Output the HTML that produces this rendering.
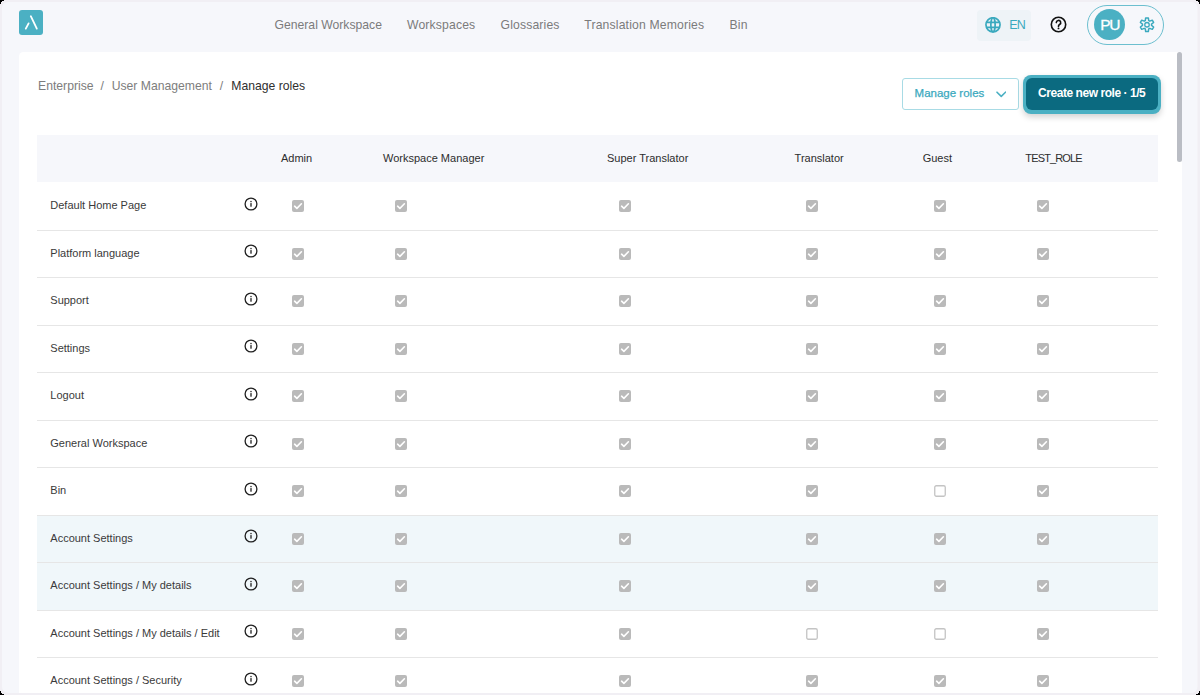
<!DOCTYPE html>
<html><head><meta charset="utf-8">
<style>
*{box-sizing:border-box;margin:0;padding:0}
html,body{width:1200px;height:695px;overflow:hidden;background:#f6f7fb}
body{font-family:"Liberation Sans",sans-serif;position:relative}
.abs{position:absolute}
.frame{position:absolute;left:0;top:0;width:1200px;height:695px;background:#f0eff4;border-radius:6px;overflow:hidden}
.inner{position:absolute;left:2px;top:2px;width:1195.5px;height:691px;background:#f6f7fb;border-radius:6px}
.t{position:absolute;white-space:nowrap;line-height:1}
.nav{font-size:12.2px;color:#7b7b7b;top:18.5px}
.bc{font-size:12.2px;color:#7d7d7d;top:80.1px}
.card{position:absolute;left:18.6px;top:52px;width:1163.4px;height:641px;background:#fff;border-radius:4.5px 4.5px 0 0;overflow:hidden}
.hdr{position:absolute;left:37.4px;top:135px;width:1121px;height:47px;background:#f6f7fb}
.hl{font-size:11px;color:#2d2d2d;top:153px}
.row{position:absolute;left:37.4px;width:1121px}
.div{position:absolute;left:37.4px;width:1121px;height:1px;background:#e6e6e6}
.rl{font-size:11px;color:#3a3a3a}
.cb{position:absolute;width:12px;height:12px;line-height:0}
.info{position:absolute;width:14px;height:14px;line-height:0}
</style></head><body>

<div class="abs" style="left:19px;top:10px;width:24.3px;height:24.8px;background:#4bb0c3;border-radius:3px"></div>
<svg class="abs" style="left:19px;top:10px" width="25" height="25" viewBox="0 0 25 25"><path d="M11.8 6.2 L17.8 18.6" stroke="#fff" stroke-width="1.8" stroke-linecap="round"/><path d="M9.6 13.4 L6.8 18.6" stroke="#fff" stroke-width="1.8" stroke-linecap="round"/></svg>
<div class="t nav" style="left:274.5px;letter-spacing:0px">General Workspace</div>
<div class="t nav" style="left:407px;letter-spacing:0.15px">Workspaces</div>
<div class="t nav" style="left:500.5px;letter-spacing:0.15px">Glossaries</div>
<div class="t nav" style="left:584.3px;letter-spacing:0.16px">Translation Memories</div>
<div class="t nav" style="left:729.4px;letter-spacing:0.2px">Bin</div>
<div class="abs" style="left:977px;top:9.5px;width:53.5px;height:31px;background:#eef3f7;border-radius:4px"></div>
<svg class="abs" style="left:985px;top:17px" width="16" height="16" viewBox="0 0 16 16"><g fill="none" stroke="#3aa9be" stroke-width="1.7"><circle cx="8" cy="7.8" r="7.05"/><path d="M1.2 5.4h13.6M1.2 10.3h13.6"/><ellipse cx="8" cy="7.8" rx="2.15" ry="7.05"/></g></svg>
<div class="t" style="left:1009.3px;top:18.9px;font-size:12.5px;letter-spacing:-1px;color:#3aa9be">EN</div>
<svg class="abs" style="left:1050.3px;top:16.1px" width="17" height="17" viewBox="0 0 17 17"><circle cx="8.5" cy="8.5" r="7.2" fill="none" stroke="#111" stroke-width="1.6"/><path d="M6.3 6.6a2.2 2.2 0 1 1 3.3 1.9c-.7.4-1.1.8-1.1 1.6v.4" fill="none" stroke="#111" stroke-width="1.6" stroke-linecap="round"/><circle cx="8.5" cy="12.4" r="0.95" fill="#111"/></svg>
<div class="abs" style="left:1087px;top:5px;width:76.5px;height:39.5px;border:1.2px solid #6cbfcf;border-radius:20px"></div>
<div class="abs" style="left:1094px;top:9.4px;width:31px;height:31px;background:#4bb0c3;border-radius:50%"></div>
<div class="t" style="left:1100.2px;top:16.9px;font-size:15.5px;color:#fff;letter-spacing:-1.2px;-webkit-text-stroke:0.3px #fff">PU</div>
<svg class="abs" style="left:1139px;top:17px" width="16" height="16" viewBox="0 0 16 16"><path fill="none" stroke="#3aa9be" stroke-width="1.5" stroke-linejoin="round" d="M9.70 3.53 L9.34 0.88 L6.66 0.88 L6.30 3.53 L5.20 4.16 L2.72 3.16 L1.38 5.47 L3.49 7.12 L3.49 8.38 L1.38 10.03 L2.72 12.34 L5.20 11.34 L6.30 11.97 L6.66 14.62 L9.34 14.62 L9.70 11.97 L10.80 11.34 L13.28 12.34 L14.62 10.03 L12.51 8.38 L12.51 7.12 L14.62 5.47 L13.28 3.16 L10.80 4.16Z"/><circle cx="8" cy="7.75" r="2.25" fill="none" stroke="#3aa9be" stroke-width="1.3"/></svg>
<div class="card"></div>
<div class="abs" style="left:1177.2px;top:52px;width:4.6px;height:110px;background:#babdc4;border-radius:3px"></div>
<div class="t bc" style="left:38px;color:#7d7d7d">Enterprise</div>
<div class="t bc" style="left:100.6px;color:#7d7d7d">/</div>
<div class="t bc" style="left:111.7px;color:#7d7d7d">User Management</div>
<div class="t bc" style="left:219.8px;color:#7d7d7d">/</div>
<div class="t bc" style="left:231.3px;color:#2f2f2f">Manage roles</div>
<div class="abs" style="left:901.5px;top:77.5px;width:117.5px;height:32px;border:1px solid #a8dbe5;border-radius:3px;background:#fff"></div>
<div class="t" style="left:914.6px;top:88.3px;font-size:11.5px;color:#3aa9be;-webkit-text-stroke:0.25px #3aa9be">Manage roles</div>
<svg class="abs" style="left:995.5px;top:90.5px" width="10.5" height="7" viewBox="0 0 10.5 7"><path d="M1 1.2 L5.25 5.4 L9.5 1.2" fill="none" stroke="#4bb0c3" stroke-width="1.6" stroke-linecap="round" stroke-linejoin="round"/></svg>
<div class="abs" style="left:1022.5px;top:75px;width:138.5px;height:38.5px;background:#4bb0c3;border-radius:8px;box-shadow:0 3px 6px rgba(0,0,0,0.18)"></div>
<div class="abs" style="left:1026px;top:78px;width:132px;height:32px;background:#0b6a80;border-radius:6px"></div>
<div class="t" style="left:1038px;top:87.3px;font-size:12px;font-weight:700;color:#fff;letter-spacing:-0.45px">Create new role · 1/5</div>
<div class="hdr"></div>
<div class="t hl" style="left:281px">Admin</div>
<div class="t hl" style="left:383px">Workspace Manager</div>
<div class="t hl" style="left:607px">Super Translator</div>
<div class="t hl" style="left:794.6px">Translator</div>
<div class="t hl" style="left:922.7px">Guest</div>
<div class="t hl" style="left:1025.3px;letter-spacing:-0.85px">TEST_ROLE</div>
<div class="row" style="top:514.9px;height:47.5px;background:#f0f7fa"></div>
<div class="row" style="top:562.4px;height:47.5px;background:#f0f7fa"></div>
<div class="div" style="top:229.9px"></div>
<div class="t rl" style="left:50.3px;top:200.4px">Default Home Page</div>
<div class="info" style="left:244px;top:196.6px"><svg width="14" height="14" viewBox="0 0 14 14"><circle cx="7" cy="7" r="5.9" stroke="#1f1f1f" stroke-width="1.3" fill="none"/><rect x="6.35" y="6.1" width="1.3" height="3.6" fill="#1f1f1f"/><rect x="6.35" y="3.9" width="1.3" height="1.3" fill="#1f1f1f"/></svg></div>
<div class="cb" style="left:292.2px;top:200.1px"><svg width="12" height="12" viewBox="0 0 12 12"><rect x="0" y="0" width="12" height="12" rx="2" fill="#bababa"/><path d="M2.6 6.2 L4.9 8.4 L9.4 3.8" stroke="#fff" stroke-width="1.6" fill="none" stroke-linecap="round" stroke-linejoin="round"/></svg></div>
<div class="cb" style="left:395.1px;top:200.1px"><svg width="12" height="12" viewBox="0 0 12 12"><rect x="0" y="0" width="12" height="12" rx="2" fill="#bababa"/><path d="M2.6 6.2 L4.9 8.4 L9.4 3.8" stroke="#fff" stroke-width="1.6" fill="none" stroke-linecap="round" stroke-linejoin="round"/></svg></div>
<div class="cb" style="left:618.8px;top:200.1px"><svg width="12" height="12" viewBox="0 0 12 12"><rect x="0" y="0" width="12" height="12" rx="2" fill="#bababa"/><path d="M2.6 6.2 L4.9 8.4 L9.4 3.8" stroke="#fff" stroke-width="1.6" fill="none" stroke-linecap="round" stroke-linejoin="round"/></svg></div>
<div class="cb" style="left:805.6px;top:200.1px"><svg width="12" height="12" viewBox="0 0 12 12"><rect x="0" y="0" width="12" height="12" rx="2" fill="#bababa"/><path d="M2.6 6.2 L4.9 8.4 L9.4 3.8" stroke="#fff" stroke-width="1.6" fill="none" stroke-linecap="round" stroke-linejoin="round"/></svg></div>
<div class="cb" style="left:934.3px;top:200.1px"><svg width="12" height="12" viewBox="0 0 12 12"><rect x="0" y="0" width="12" height="12" rx="2" fill="#bababa"/><path d="M2.6 6.2 L4.9 8.4 L9.4 3.8" stroke="#fff" stroke-width="1.6" fill="none" stroke-linecap="round" stroke-linejoin="round"/></svg></div>
<div class="cb" style="left:1036.5px;top:200.1px"><svg width="12" height="12" viewBox="0 0 12 12"><rect x="0" y="0" width="12" height="12" rx="2" fill="#bababa"/><path d="M2.6 6.2 L4.9 8.4 L9.4 3.8" stroke="#fff" stroke-width="1.6" fill="none" stroke-linecap="round" stroke-linejoin="round"/></svg></div>
<div class="div" style="top:277.4px"></div>
<div class="t rl" style="left:50.3px;top:247.9px">Platform language</div>
<div class="info" style="left:244px;top:244.1px"><svg width="14" height="14" viewBox="0 0 14 14"><circle cx="7" cy="7" r="5.9" stroke="#1f1f1f" stroke-width="1.3" fill="none"/><rect x="6.35" y="6.1" width="1.3" height="3.6" fill="#1f1f1f"/><rect x="6.35" y="3.9" width="1.3" height="1.3" fill="#1f1f1f"/></svg></div>
<div class="cb" style="left:292.2px;top:247.6px"><svg width="12" height="12" viewBox="0 0 12 12"><rect x="0" y="0" width="12" height="12" rx="2" fill="#bababa"/><path d="M2.6 6.2 L4.9 8.4 L9.4 3.8" stroke="#fff" stroke-width="1.6" fill="none" stroke-linecap="round" stroke-linejoin="round"/></svg></div>
<div class="cb" style="left:395.1px;top:247.6px"><svg width="12" height="12" viewBox="0 0 12 12"><rect x="0" y="0" width="12" height="12" rx="2" fill="#bababa"/><path d="M2.6 6.2 L4.9 8.4 L9.4 3.8" stroke="#fff" stroke-width="1.6" fill="none" stroke-linecap="round" stroke-linejoin="round"/></svg></div>
<div class="cb" style="left:618.8px;top:247.6px"><svg width="12" height="12" viewBox="0 0 12 12"><rect x="0" y="0" width="12" height="12" rx="2" fill="#bababa"/><path d="M2.6 6.2 L4.9 8.4 L9.4 3.8" stroke="#fff" stroke-width="1.6" fill="none" stroke-linecap="round" stroke-linejoin="round"/></svg></div>
<div class="cb" style="left:805.6px;top:247.6px"><svg width="12" height="12" viewBox="0 0 12 12"><rect x="0" y="0" width="12" height="12" rx="2" fill="#bababa"/><path d="M2.6 6.2 L4.9 8.4 L9.4 3.8" stroke="#fff" stroke-width="1.6" fill="none" stroke-linecap="round" stroke-linejoin="round"/></svg></div>
<div class="cb" style="left:934.3px;top:247.6px"><svg width="12" height="12" viewBox="0 0 12 12"><rect x="0" y="0" width="12" height="12" rx="2" fill="#bababa"/><path d="M2.6 6.2 L4.9 8.4 L9.4 3.8" stroke="#fff" stroke-width="1.6" fill="none" stroke-linecap="round" stroke-linejoin="round"/></svg></div>
<div class="cb" style="left:1036.5px;top:247.6px"><svg width="12" height="12" viewBox="0 0 12 12"><rect x="0" y="0" width="12" height="12" rx="2" fill="#bababa"/><path d="M2.6 6.2 L4.9 8.4 L9.4 3.8" stroke="#fff" stroke-width="1.6" fill="none" stroke-linecap="round" stroke-linejoin="round"/></svg></div>
<div class="div" style="top:324.9px"></div>
<div class="t rl" style="left:50.3px;top:295.4px">Support</div>
<div class="info" style="left:244px;top:291.59999999999997px"><svg width="14" height="14" viewBox="0 0 14 14"><circle cx="7" cy="7" r="5.9" stroke="#1f1f1f" stroke-width="1.3" fill="none"/><rect x="6.35" y="6.1" width="1.3" height="3.6" fill="#1f1f1f"/><rect x="6.35" y="3.9" width="1.3" height="1.3" fill="#1f1f1f"/></svg></div>
<div class="cb" style="left:292.2px;top:295.09999999999997px"><svg width="12" height="12" viewBox="0 0 12 12"><rect x="0" y="0" width="12" height="12" rx="2" fill="#bababa"/><path d="M2.6 6.2 L4.9 8.4 L9.4 3.8" stroke="#fff" stroke-width="1.6" fill="none" stroke-linecap="round" stroke-linejoin="round"/></svg></div>
<div class="cb" style="left:395.1px;top:295.09999999999997px"><svg width="12" height="12" viewBox="0 0 12 12"><rect x="0" y="0" width="12" height="12" rx="2" fill="#bababa"/><path d="M2.6 6.2 L4.9 8.4 L9.4 3.8" stroke="#fff" stroke-width="1.6" fill="none" stroke-linecap="round" stroke-linejoin="round"/></svg></div>
<div class="cb" style="left:618.8px;top:295.09999999999997px"><svg width="12" height="12" viewBox="0 0 12 12"><rect x="0" y="0" width="12" height="12" rx="2" fill="#bababa"/><path d="M2.6 6.2 L4.9 8.4 L9.4 3.8" stroke="#fff" stroke-width="1.6" fill="none" stroke-linecap="round" stroke-linejoin="round"/></svg></div>
<div class="cb" style="left:805.6px;top:295.09999999999997px"><svg width="12" height="12" viewBox="0 0 12 12"><rect x="0" y="0" width="12" height="12" rx="2" fill="#bababa"/><path d="M2.6 6.2 L4.9 8.4 L9.4 3.8" stroke="#fff" stroke-width="1.6" fill="none" stroke-linecap="round" stroke-linejoin="round"/></svg></div>
<div class="cb" style="left:934.3px;top:295.09999999999997px"><svg width="12" height="12" viewBox="0 0 12 12"><rect x="0" y="0" width="12" height="12" rx="2" fill="#bababa"/><path d="M2.6 6.2 L4.9 8.4 L9.4 3.8" stroke="#fff" stroke-width="1.6" fill="none" stroke-linecap="round" stroke-linejoin="round"/></svg></div>
<div class="cb" style="left:1036.5px;top:295.09999999999997px"><svg width="12" height="12" viewBox="0 0 12 12"><rect x="0" y="0" width="12" height="12" rx="2" fill="#bababa"/><path d="M2.6 6.2 L4.9 8.4 L9.4 3.8" stroke="#fff" stroke-width="1.6" fill="none" stroke-linecap="round" stroke-linejoin="round"/></svg></div>
<div class="div" style="top:372.4px"></div>
<div class="t rl" style="left:50.3px;top:342.9px">Settings</div>
<div class="info" style="left:244px;top:339.09999999999997px"><svg width="14" height="14" viewBox="0 0 14 14"><circle cx="7" cy="7" r="5.9" stroke="#1f1f1f" stroke-width="1.3" fill="none"/><rect x="6.35" y="6.1" width="1.3" height="3.6" fill="#1f1f1f"/><rect x="6.35" y="3.9" width="1.3" height="1.3" fill="#1f1f1f"/></svg></div>
<div class="cb" style="left:292.2px;top:342.59999999999997px"><svg width="12" height="12" viewBox="0 0 12 12"><rect x="0" y="0" width="12" height="12" rx="2" fill="#bababa"/><path d="M2.6 6.2 L4.9 8.4 L9.4 3.8" stroke="#fff" stroke-width="1.6" fill="none" stroke-linecap="round" stroke-linejoin="round"/></svg></div>
<div class="cb" style="left:395.1px;top:342.59999999999997px"><svg width="12" height="12" viewBox="0 0 12 12"><rect x="0" y="0" width="12" height="12" rx="2" fill="#bababa"/><path d="M2.6 6.2 L4.9 8.4 L9.4 3.8" stroke="#fff" stroke-width="1.6" fill="none" stroke-linecap="round" stroke-linejoin="round"/></svg></div>
<div class="cb" style="left:618.8px;top:342.59999999999997px"><svg width="12" height="12" viewBox="0 0 12 12"><rect x="0" y="0" width="12" height="12" rx="2" fill="#bababa"/><path d="M2.6 6.2 L4.9 8.4 L9.4 3.8" stroke="#fff" stroke-width="1.6" fill="none" stroke-linecap="round" stroke-linejoin="round"/></svg></div>
<div class="cb" style="left:805.6px;top:342.59999999999997px"><svg width="12" height="12" viewBox="0 0 12 12"><rect x="0" y="0" width="12" height="12" rx="2" fill="#bababa"/><path d="M2.6 6.2 L4.9 8.4 L9.4 3.8" stroke="#fff" stroke-width="1.6" fill="none" stroke-linecap="round" stroke-linejoin="round"/></svg></div>
<div class="cb" style="left:934.3px;top:342.59999999999997px"><svg width="12" height="12" viewBox="0 0 12 12"><rect x="0" y="0" width="12" height="12" rx="2" fill="#bababa"/><path d="M2.6 6.2 L4.9 8.4 L9.4 3.8" stroke="#fff" stroke-width="1.6" fill="none" stroke-linecap="round" stroke-linejoin="round"/></svg></div>
<div class="cb" style="left:1036.5px;top:342.59999999999997px"><svg width="12" height="12" viewBox="0 0 12 12"><rect x="0" y="0" width="12" height="12" rx="2" fill="#bababa"/><path d="M2.6 6.2 L4.9 8.4 L9.4 3.8" stroke="#fff" stroke-width="1.6" fill="none" stroke-linecap="round" stroke-linejoin="round"/></svg></div>
<div class="div" style="top:419.9px"></div>
<div class="t rl" style="left:50.3px;top:390.4px">Logout</div>
<div class="info" style="left:244px;top:386.59999999999997px"><svg width="14" height="14" viewBox="0 0 14 14"><circle cx="7" cy="7" r="5.9" stroke="#1f1f1f" stroke-width="1.3" fill="none"/><rect x="6.35" y="6.1" width="1.3" height="3.6" fill="#1f1f1f"/><rect x="6.35" y="3.9" width="1.3" height="1.3" fill="#1f1f1f"/></svg></div>
<div class="cb" style="left:292.2px;top:390.09999999999997px"><svg width="12" height="12" viewBox="0 0 12 12"><rect x="0" y="0" width="12" height="12" rx="2" fill="#bababa"/><path d="M2.6 6.2 L4.9 8.4 L9.4 3.8" stroke="#fff" stroke-width="1.6" fill="none" stroke-linecap="round" stroke-linejoin="round"/></svg></div>
<div class="cb" style="left:395.1px;top:390.09999999999997px"><svg width="12" height="12" viewBox="0 0 12 12"><rect x="0" y="0" width="12" height="12" rx="2" fill="#bababa"/><path d="M2.6 6.2 L4.9 8.4 L9.4 3.8" stroke="#fff" stroke-width="1.6" fill="none" stroke-linecap="round" stroke-linejoin="round"/></svg></div>
<div class="cb" style="left:618.8px;top:390.09999999999997px"><svg width="12" height="12" viewBox="0 0 12 12"><rect x="0" y="0" width="12" height="12" rx="2" fill="#bababa"/><path d="M2.6 6.2 L4.9 8.4 L9.4 3.8" stroke="#fff" stroke-width="1.6" fill="none" stroke-linecap="round" stroke-linejoin="round"/></svg></div>
<div class="cb" style="left:805.6px;top:390.09999999999997px"><svg width="12" height="12" viewBox="0 0 12 12"><rect x="0" y="0" width="12" height="12" rx="2" fill="#bababa"/><path d="M2.6 6.2 L4.9 8.4 L9.4 3.8" stroke="#fff" stroke-width="1.6" fill="none" stroke-linecap="round" stroke-linejoin="round"/></svg></div>
<div class="cb" style="left:934.3px;top:390.09999999999997px"><svg width="12" height="12" viewBox="0 0 12 12"><rect x="0" y="0" width="12" height="12" rx="2" fill="#bababa"/><path d="M2.6 6.2 L4.9 8.4 L9.4 3.8" stroke="#fff" stroke-width="1.6" fill="none" stroke-linecap="round" stroke-linejoin="round"/></svg></div>
<div class="cb" style="left:1036.5px;top:390.09999999999997px"><svg width="12" height="12" viewBox="0 0 12 12"><rect x="0" y="0" width="12" height="12" rx="2" fill="#bababa"/><path d="M2.6 6.2 L4.9 8.4 L9.4 3.8" stroke="#fff" stroke-width="1.6" fill="none" stroke-linecap="round" stroke-linejoin="round"/></svg></div>
<div class="div" style="top:467.4px"></div>
<div class="t rl" style="left:50.3px;top:437.9px">General Workspace</div>
<div class="info" style="left:244px;top:434.09999999999997px"><svg width="14" height="14" viewBox="0 0 14 14"><circle cx="7" cy="7" r="5.9" stroke="#1f1f1f" stroke-width="1.3" fill="none"/><rect x="6.35" y="6.1" width="1.3" height="3.6" fill="#1f1f1f"/><rect x="6.35" y="3.9" width="1.3" height="1.3" fill="#1f1f1f"/></svg></div>
<div class="cb" style="left:292.2px;top:437.59999999999997px"><svg width="12" height="12" viewBox="0 0 12 12"><rect x="0" y="0" width="12" height="12" rx="2" fill="#bababa"/><path d="M2.6 6.2 L4.9 8.4 L9.4 3.8" stroke="#fff" stroke-width="1.6" fill="none" stroke-linecap="round" stroke-linejoin="round"/></svg></div>
<div class="cb" style="left:395.1px;top:437.59999999999997px"><svg width="12" height="12" viewBox="0 0 12 12"><rect x="0" y="0" width="12" height="12" rx="2" fill="#bababa"/><path d="M2.6 6.2 L4.9 8.4 L9.4 3.8" stroke="#fff" stroke-width="1.6" fill="none" stroke-linecap="round" stroke-linejoin="round"/></svg></div>
<div class="cb" style="left:618.8px;top:437.59999999999997px"><svg width="12" height="12" viewBox="0 0 12 12"><rect x="0" y="0" width="12" height="12" rx="2" fill="#bababa"/><path d="M2.6 6.2 L4.9 8.4 L9.4 3.8" stroke="#fff" stroke-width="1.6" fill="none" stroke-linecap="round" stroke-linejoin="round"/></svg></div>
<div class="cb" style="left:805.6px;top:437.59999999999997px"><svg width="12" height="12" viewBox="0 0 12 12"><rect x="0" y="0" width="12" height="12" rx="2" fill="#bababa"/><path d="M2.6 6.2 L4.9 8.4 L9.4 3.8" stroke="#fff" stroke-width="1.6" fill="none" stroke-linecap="round" stroke-linejoin="round"/></svg></div>
<div class="cb" style="left:934.3px;top:437.59999999999997px"><svg width="12" height="12" viewBox="0 0 12 12"><rect x="0" y="0" width="12" height="12" rx="2" fill="#bababa"/><path d="M2.6 6.2 L4.9 8.4 L9.4 3.8" stroke="#fff" stroke-width="1.6" fill="none" stroke-linecap="round" stroke-linejoin="round"/></svg></div>
<div class="cb" style="left:1036.5px;top:437.59999999999997px"><svg width="12" height="12" viewBox="0 0 12 12"><rect x="0" y="0" width="12" height="12" rx="2" fill="#bababa"/><path d="M2.6 6.2 L4.9 8.4 L9.4 3.8" stroke="#fff" stroke-width="1.6" fill="none" stroke-linecap="round" stroke-linejoin="round"/></svg></div>
<div class="div" style="top:514.9px"></div>
<div class="t rl" style="left:50.3px;top:485.4px">Bin</div>
<div class="info" style="left:244px;top:481.59999999999997px"><svg width="14" height="14" viewBox="0 0 14 14"><circle cx="7" cy="7" r="5.9" stroke="#1f1f1f" stroke-width="1.3" fill="none"/><rect x="6.35" y="6.1" width="1.3" height="3.6" fill="#1f1f1f"/><rect x="6.35" y="3.9" width="1.3" height="1.3" fill="#1f1f1f"/></svg></div>
<div class="cb" style="left:292.2px;top:485.09999999999997px"><svg width="12" height="12" viewBox="0 0 12 12"><rect x="0" y="0" width="12" height="12" rx="2" fill="#bababa"/><path d="M2.6 6.2 L4.9 8.4 L9.4 3.8" stroke="#fff" stroke-width="1.6" fill="none" stroke-linecap="round" stroke-linejoin="round"/></svg></div>
<div class="cb" style="left:395.1px;top:485.09999999999997px"><svg width="12" height="12" viewBox="0 0 12 12"><rect x="0" y="0" width="12" height="12" rx="2" fill="#bababa"/><path d="M2.6 6.2 L4.9 8.4 L9.4 3.8" stroke="#fff" stroke-width="1.6" fill="none" stroke-linecap="round" stroke-linejoin="round"/></svg></div>
<div class="cb" style="left:618.8px;top:485.09999999999997px"><svg width="12" height="12" viewBox="0 0 12 12"><rect x="0" y="0" width="12" height="12" rx="2" fill="#bababa"/><path d="M2.6 6.2 L4.9 8.4 L9.4 3.8" stroke="#fff" stroke-width="1.6" fill="none" stroke-linecap="round" stroke-linejoin="round"/></svg></div>
<div class="cb" style="left:805.6px;top:485.09999999999997px"><svg width="12" height="12" viewBox="0 0 12 12"><rect x="0" y="0" width="12" height="12" rx="2" fill="#bababa"/><path d="M2.6 6.2 L4.9 8.4 L9.4 3.8" stroke="#fff" stroke-width="1.6" fill="none" stroke-linecap="round" stroke-linejoin="round"/></svg></div>
<div class="cb" style="left:934.3px;top:485.09999999999997px"><svg width="12" height="12" viewBox="0 0 12 12"><rect x="0.75" y="0.75" width="10.5" height="10.5" rx="1.5" fill="#fff" stroke="#c4c4c4" stroke-width="1.3"/></svg></div>
<div class="cb" style="left:1036.5px;top:485.09999999999997px"><svg width="12" height="12" viewBox="0 0 12 12"><rect x="0" y="0" width="12" height="12" rx="2" fill="#bababa"/><path d="M2.6 6.2 L4.9 8.4 L9.4 3.8" stroke="#fff" stroke-width="1.6" fill="none" stroke-linecap="round" stroke-linejoin="round"/></svg></div>
<div class="div" style="top:562.4px"></div>
<div class="t rl" style="left:50.3px;top:532.9px">Account Settings</div>
<div class="info" style="left:244px;top:529.1px"><svg width="14" height="14" viewBox="0 0 14 14"><circle cx="7" cy="7" r="5.9" stroke="#1f1f1f" stroke-width="1.3" fill="none"/><rect x="6.35" y="6.1" width="1.3" height="3.6" fill="#1f1f1f"/><rect x="6.35" y="3.9" width="1.3" height="1.3" fill="#1f1f1f"/></svg></div>
<div class="cb" style="left:292.2px;top:532.6px"><svg width="12" height="12" viewBox="0 0 12 12"><rect x="0" y="0" width="12" height="12" rx="2" fill="#bababa"/><path d="M2.6 6.2 L4.9 8.4 L9.4 3.8" stroke="#fff" stroke-width="1.6" fill="none" stroke-linecap="round" stroke-linejoin="round"/></svg></div>
<div class="cb" style="left:395.1px;top:532.6px"><svg width="12" height="12" viewBox="0 0 12 12"><rect x="0" y="0" width="12" height="12" rx="2" fill="#bababa"/><path d="M2.6 6.2 L4.9 8.4 L9.4 3.8" stroke="#fff" stroke-width="1.6" fill="none" stroke-linecap="round" stroke-linejoin="round"/></svg></div>
<div class="cb" style="left:618.8px;top:532.6px"><svg width="12" height="12" viewBox="0 0 12 12"><rect x="0" y="0" width="12" height="12" rx="2" fill="#bababa"/><path d="M2.6 6.2 L4.9 8.4 L9.4 3.8" stroke="#fff" stroke-width="1.6" fill="none" stroke-linecap="round" stroke-linejoin="round"/></svg></div>
<div class="cb" style="left:805.6px;top:532.6px"><svg width="12" height="12" viewBox="0 0 12 12"><rect x="0" y="0" width="12" height="12" rx="2" fill="#bababa"/><path d="M2.6 6.2 L4.9 8.4 L9.4 3.8" stroke="#fff" stroke-width="1.6" fill="none" stroke-linecap="round" stroke-linejoin="round"/></svg></div>
<div class="cb" style="left:934.3px;top:532.6px"><svg width="12" height="12" viewBox="0 0 12 12"><rect x="0" y="0" width="12" height="12" rx="2" fill="#bababa"/><path d="M2.6 6.2 L4.9 8.4 L9.4 3.8" stroke="#fff" stroke-width="1.6" fill="none" stroke-linecap="round" stroke-linejoin="round"/></svg></div>
<div class="cb" style="left:1036.5px;top:532.6px"><svg width="12" height="12" viewBox="0 0 12 12"><rect x="0" y="0" width="12" height="12" rx="2" fill="#bababa"/><path d="M2.6 6.2 L4.9 8.4 L9.4 3.8" stroke="#fff" stroke-width="1.6" fill="none" stroke-linecap="round" stroke-linejoin="round"/></svg></div>
<div class="div" style="top:609.9px"></div>
<div class="t rl" style="left:50.3px;top:580.4px">Account Settings / My details</div>
<div class="info" style="left:244px;top:576.6px"><svg width="14" height="14" viewBox="0 0 14 14"><circle cx="7" cy="7" r="5.9" stroke="#1f1f1f" stroke-width="1.3" fill="none"/><rect x="6.35" y="6.1" width="1.3" height="3.6" fill="#1f1f1f"/><rect x="6.35" y="3.9" width="1.3" height="1.3" fill="#1f1f1f"/></svg></div>
<div class="cb" style="left:292.2px;top:580.1px"><svg width="12" height="12" viewBox="0 0 12 12"><rect x="0" y="0" width="12" height="12" rx="2" fill="#bababa"/><path d="M2.6 6.2 L4.9 8.4 L9.4 3.8" stroke="#fff" stroke-width="1.6" fill="none" stroke-linecap="round" stroke-linejoin="round"/></svg></div>
<div class="cb" style="left:395.1px;top:580.1px"><svg width="12" height="12" viewBox="0 0 12 12"><rect x="0" y="0" width="12" height="12" rx="2" fill="#bababa"/><path d="M2.6 6.2 L4.9 8.4 L9.4 3.8" stroke="#fff" stroke-width="1.6" fill="none" stroke-linecap="round" stroke-linejoin="round"/></svg></div>
<div class="cb" style="left:618.8px;top:580.1px"><svg width="12" height="12" viewBox="0 0 12 12"><rect x="0" y="0" width="12" height="12" rx="2" fill="#bababa"/><path d="M2.6 6.2 L4.9 8.4 L9.4 3.8" stroke="#fff" stroke-width="1.6" fill="none" stroke-linecap="round" stroke-linejoin="round"/></svg></div>
<div class="cb" style="left:805.6px;top:580.1px"><svg width="12" height="12" viewBox="0 0 12 12"><rect x="0" y="0" width="12" height="12" rx="2" fill="#bababa"/><path d="M2.6 6.2 L4.9 8.4 L9.4 3.8" stroke="#fff" stroke-width="1.6" fill="none" stroke-linecap="round" stroke-linejoin="round"/></svg></div>
<div class="cb" style="left:934.3px;top:580.1px"><svg width="12" height="12" viewBox="0 0 12 12"><rect x="0" y="0" width="12" height="12" rx="2" fill="#bababa"/><path d="M2.6 6.2 L4.9 8.4 L9.4 3.8" stroke="#fff" stroke-width="1.6" fill="none" stroke-linecap="round" stroke-linejoin="round"/></svg></div>
<div class="cb" style="left:1036.5px;top:580.1px"><svg width="12" height="12" viewBox="0 0 12 12"><rect x="0" y="0" width="12" height="12" rx="2" fill="#bababa"/><path d="M2.6 6.2 L4.9 8.4 L9.4 3.8" stroke="#fff" stroke-width="1.6" fill="none" stroke-linecap="round" stroke-linejoin="round"/></svg></div>
<div class="div" style="top:657.4px"></div>
<div class="t rl" style="left:50.3px;top:627.9px">Account Settings / My details / Edit</div>
<div class="info" style="left:244px;top:624.1px"><svg width="14" height="14" viewBox="0 0 14 14"><circle cx="7" cy="7" r="5.9" stroke="#1f1f1f" stroke-width="1.3" fill="none"/><rect x="6.35" y="6.1" width="1.3" height="3.6" fill="#1f1f1f"/><rect x="6.35" y="3.9" width="1.3" height="1.3" fill="#1f1f1f"/></svg></div>
<div class="cb" style="left:292.2px;top:627.6px"><svg width="12" height="12" viewBox="0 0 12 12"><rect x="0" y="0" width="12" height="12" rx="2" fill="#bababa"/><path d="M2.6 6.2 L4.9 8.4 L9.4 3.8" stroke="#fff" stroke-width="1.6" fill="none" stroke-linecap="round" stroke-linejoin="round"/></svg></div>
<div class="cb" style="left:395.1px;top:627.6px"><svg width="12" height="12" viewBox="0 0 12 12"><rect x="0" y="0" width="12" height="12" rx="2" fill="#bababa"/><path d="M2.6 6.2 L4.9 8.4 L9.4 3.8" stroke="#fff" stroke-width="1.6" fill="none" stroke-linecap="round" stroke-linejoin="round"/></svg></div>
<div class="cb" style="left:618.8px;top:627.6px"><svg width="12" height="12" viewBox="0 0 12 12"><rect x="0" y="0" width="12" height="12" rx="2" fill="#bababa"/><path d="M2.6 6.2 L4.9 8.4 L9.4 3.8" stroke="#fff" stroke-width="1.6" fill="none" stroke-linecap="round" stroke-linejoin="round"/></svg></div>
<div class="cb" style="left:805.6px;top:627.6px"><svg width="12" height="12" viewBox="0 0 12 12"><rect x="0.75" y="0.75" width="10.5" height="10.5" rx="1.5" fill="#fff" stroke="#c4c4c4" stroke-width="1.3"/></svg></div>
<div class="cb" style="left:934.3px;top:627.6px"><svg width="12" height="12" viewBox="0 0 12 12"><rect x="0.75" y="0.75" width="10.5" height="10.5" rx="1.5" fill="#fff" stroke="#c4c4c4" stroke-width="1.3"/></svg></div>
<div class="cb" style="left:1036.5px;top:627.6px"><svg width="12" height="12" viewBox="0 0 12 12"><rect x="0" y="0" width="12" height="12" rx="2" fill="#bababa"/><path d="M2.6 6.2 L4.9 8.4 L9.4 3.8" stroke="#fff" stroke-width="1.6" fill="none" stroke-linecap="round" stroke-linejoin="round"/></svg></div>
<div class="div" style="top:704.9px"></div>
<div class="t rl" style="left:50.3px;top:675.4px">Account Settings / Security</div>
<div class="info" style="left:244px;top:671.6px"><svg width="14" height="14" viewBox="0 0 14 14"><circle cx="7" cy="7" r="5.9" stroke="#1f1f1f" stroke-width="1.3" fill="none"/><rect x="6.35" y="6.1" width="1.3" height="3.6" fill="#1f1f1f"/><rect x="6.35" y="3.9" width="1.3" height="1.3" fill="#1f1f1f"/></svg></div>
<div class="cb" style="left:292.2px;top:675.1px"><svg width="12" height="12" viewBox="0 0 12 12"><rect x="0" y="0" width="12" height="12" rx="2" fill="#bababa"/><path d="M2.6 6.2 L4.9 8.4 L9.4 3.8" stroke="#fff" stroke-width="1.6" fill="none" stroke-linecap="round" stroke-linejoin="round"/></svg></div>
<div class="cb" style="left:395.1px;top:675.1px"><svg width="12" height="12" viewBox="0 0 12 12"><rect x="0" y="0" width="12" height="12" rx="2" fill="#bababa"/><path d="M2.6 6.2 L4.9 8.4 L9.4 3.8" stroke="#fff" stroke-width="1.6" fill="none" stroke-linecap="round" stroke-linejoin="round"/></svg></div>
<div class="cb" style="left:618.8px;top:675.1px"><svg width="12" height="12" viewBox="0 0 12 12"><rect x="0" y="0" width="12" height="12" rx="2" fill="#bababa"/><path d="M2.6 6.2 L4.9 8.4 L9.4 3.8" stroke="#fff" stroke-width="1.6" fill="none" stroke-linecap="round" stroke-linejoin="round"/></svg></div>
<div class="cb" style="left:805.6px;top:675.1px"><svg width="12" height="12" viewBox="0 0 12 12"><rect x="0" y="0" width="12" height="12" rx="2" fill="#bababa"/><path d="M2.6 6.2 L4.9 8.4 L9.4 3.8" stroke="#fff" stroke-width="1.6" fill="none" stroke-linecap="round" stroke-linejoin="round"/></svg></div>
<div class="cb" style="left:934.3px;top:675.1px"><svg width="12" height="12" viewBox="0 0 12 12"><rect x="0" y="0" width="12" height="12" rx="2" fill="#bababa"/><path d="M2.6 6.2 L4.9 8.4 L9.4 3.8" stroke="#fff" stroke-width="1.6" fill="none" stroke-linecap="round" stroke-linejoin="round"/></svg></div>
<div class="cb" style="left:1036.5px;top:675.1px"><svg width="12" height="12" viewBox="0 0 12 12"><rect x="0" y="0" width="12" height="12" rx="2" fill="#bababa"/><path d="M2.6 6.2 L4.9 8.4 L9.4 3.8" stroke="#fff" stroke-width="1.6" fill="none" stroke-linecap="round" stroke-linejoin="round"/></svg></div>
<svg class="abs" style="left:0;top:0" width="1200" height="695"><path fill="#f1eff4" fill-rule="evenodd" d="M0 0H1200V695H0Z M2 8a6 6 0 0 1 6-6H1191.5a6 6 0 0 1 6 6V687a6 6 0 0 1-6 6H8a6 6 0 0 1-6-6Z"/><path fill="#000" fill-rule="evenodd" shape-rendering="crispEdges" d="M0 0H1200V695H0Z M0 6a6 6 0 0 1 6-6H1194a6 6 0 0 1 6 6V689a6 6 0 0 1-6 6H6a6 6 0 0 1-6-6Z"/></svg>
</body></html>
